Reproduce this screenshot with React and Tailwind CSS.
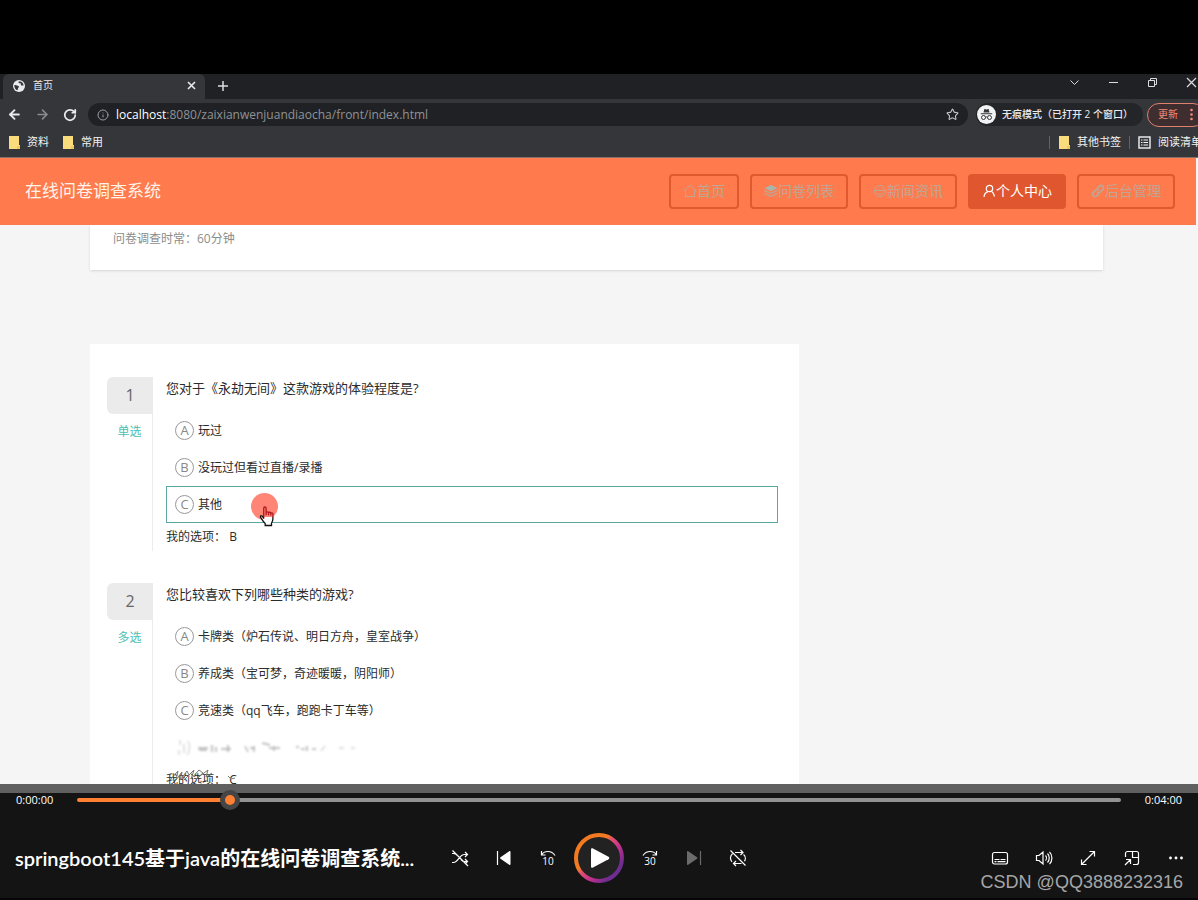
import React, { useState } from "react";
import { ArrowLeft, ArrowRight, Info, RotateCw, Star } from "lucide-react";

const questions = [
  {
    id: 1,
    type: "单选",
    input: "radio",
    title: "您对于《永劫无间》这款游戏的体验程度是?",
    options: ["玩过", "没玩过但看过直播/录播", "其他"],
    hovered: 2,
    answer: "B",
  },
  {
    id: 2,
    type: "多选",
    input: "checkbox",
    title: "您比较喜欢下列哪些种类的游戏?",
    options: [
      "卡牌类（炉石传说、明日方舟，皇室战争）",
      "养成类（宝可梦，奇迹暖暖，阴阳师）",
      "竞速类（qq飞车，跑跑卡丁车等）",
    ],
    hovered: -1,
    loading: true,
    answer: "C",
  },
];

const HomeIcon = () => (
  <svg viewBox="0 0 14 14" className="size-[14px]" fill="none" stroke="currentColor">
    <path d="M.8 7 7 1.300 13.200 7M2.500 5.800v6.700h9V5.800" />
  </svg>
);

const LayersIcon = () => (
  <svg viewBox="0 0 14 14" className="size-[14px]" fill="currentColor">
    <path d="M7 1 13.500 4 7 7.200.5 4z" fill="#a9b5ac" />
    <path d="m.5 5.500 6.500 3.200 6.500-3.200v1.500L7 10.200.5 7zM.5 8.500l6.500 3.200 6.500-3.200v1.500L7 13.200.5 10z" />
  </svg>
);

const FaceIcon = () => (
  <svg viewBox="0 0 14 14" className="size-[14px]" fill="none" stroke="currentColor">
    <circle cx="7" cy="7" r="5.500" />
    <path d="M2 6.500h10M4.500 5h1.200M8.300 5h1.200M4.300 9.200c1.500 1.300 3.900 1.300 5.400 0" />
  </svg>
);

const UserIcon = () => (
  <svg viewBox="0 0 14 14" className="size-[14px]" fill="none" stroke="currentColor" strokeWidth="1.200">
    <circle cx="7.500" cy="4.500" r="3.200" />
    <path d="M2 13c.3-3 1.800-4.800 4-5.400M9.500 7.300C11.500 8.500 12 10.500 12.500 12.500" />
  </svg>
);

const LinkIcon = () => (
  <svg viewBox="0 0 14 14" className="size-[14px]" fill="none" stroke="currentColor" strokeWidth="1.800">
    <path d="m6 4.500 2.300-2.300a2.300 2.300 0 0 1 3.400 3.400L9.300 8a2.300 2.300 0 0 1-3.300 0" />
    <path d="m8 9.500-2.300 2.300a2.300 2.300 0 0 1-3.400-3.400L4.700 6A2.300 2.300 0 0 1 8 6" />
  </svg>
);

const navItems = [
  { label: "首页", Icon: HomeIcon },
  { label: "问卷列表", Icon: LayersIcon },
  { label: "新闻资讯", Icon: FaceIcon },
  { label: "个人中心", Icon: UserIcon, active: true },
  { label: "后台管理", Icon: LinkIcon },
];

const Folder = () => (
  <svg viewBox="0 0 11 13" className="h-[13px] w-[11px]">
    <path d="M0 0h10v9h1v4H0z" fill="#fbdc7c" />
    <path d="M8 10h3v3H8z" fill="#f2c94f" />
  </svg>
);

const TabStrip = () => (
  <div className="flex h-[25px] items-stretch bg-[#202124] pl-[3px]">
    <div className="flex w-[202px] items-center rounded-t-md bg-[#35363a] pr-2 pb-[2px] pl-2.5 text-[#e8eaed]">
      <svg viewBox="0 0 12 12" className="size-3">
        <circle cx="6" cy="6" r="6" fill="#e8eaed" />
        <path
          d="M1.300 5.200c1.200-.6 2-.2 2.700.4.700.7 1.900.2 2 1.200.1.900-1.200 1-1 1.900.1.700-.4 1.400-1 1.600C2.300 9.300 1.200 7.400 1.300 5.200zM6.500 1.300c-1.300.4-1.500 1.300-.5 1.800.9.400 1.100-.3 1.700.3.600.7-.4 1.400.5 2 .9.500 1.400-.4 2.400.2C10.600 3.400 9 1.500 6.500 1.300z"
          fill="#35363a"
        />
      </svg>
      <span className="ml-2 flex-1 text-[10px]">首页</span>
      <button type="button" aria-label="关闭标签页">
        <svg viewBox="0 0 11 11" className="size-[11px]" stroke="currentColor" strokeWidth="1.600">
          <path d="m2 2 7 7M9 2 2 9" />
        </svg>
      </button>
    </div>
    <button type="button" aria-label="新标签页" className="ml-3 pb-[2px] text-[#dadce0]">
      <svg viewBox="0 0 12 12" className="size-3" stroke="currentColor" strokeWidth="1.500">
        <path d="M6 1v10M1 6h10" />
      </svg>
    </button>
    <div className="ml-auto flex items-start gap-7 pt-[3px] pr-px text-[#dadce0]">
      <button type="button" aria-label="搜索标签页">
        <svg viewBox="0 0 11 11" className="size-[11px]" fill="none" stroke="currentColor">
          <path d="m1.500 3.500 4 4 4-4" />
        </svg>
      </button>
      <button type="button" aria-label="最小化">
        <svg viewBox="0 0 11 11" className="size-[11px]" stroke="currentColor">
          <path d="M1 5.500h9" />
        </svg>
      </button>
      <button type="button" aria-label="还原">
        <svg viewBox="0 0 11 11" className="size-[11px]" fill="none" stroke="currentColor">
          <path d="M1.500 3.500h6v6h-6zM3.500 3.500v-2h6v6h-2" />
        </svg>
      </button>
      <button type="button" aria-label="关闭">
        <svg viewBox="0 0 11 11" className="size-[11px]" stroke="currentColor" strokeWidth="1.200">
          <path d="m1 1 9 9M10 1l-9 9" />
        </svg>
      </button>
    </div>
  </div>
);

const Toolbar = () => (
  <div className="flex h-[31px] items-center bg-[#35363a] pl-[7px] text-[#e8eaed]">
    <div className="flex items-center gap-[13px]">
      <button type="button" aria-label="后退">
        <ArrowLeft className="size-[15px]" strokeWidth={3} />
      </button>
      <button type="button" aria-label="前进" className="text-[#8b8c90]">
        <ArrowRight className="size-[15px]" strokeWidth={2.5} />
      </button>
      <button type="button" aria-label="刷新">
        <RotateCw className="size-[14px]" strokeWidth={3} />
      </button>
    </div>
    <div className="ml-[11px] flex h-[23px] flex-1 items-center rounded-full bg-[#202124] px-[9px]">
      <Info className="size-3 text-[#9aa0a6]" />
      <a href="#" className="ml-[7px] text-xs text-[#8f9397]">
        <span className="font-medium text-white">localhost</span>
        :8080/zaixianwenjuandiaocha/front/index.html
      </a>
      <Star className="ml-auto size-[13px] text-[#c5c7ca]" />
    </div>
    <div className="ml-2 flex h-[23px] w-[167px] shrink-0 items-center rounded-full bg-[#242528] pl-px">
      <svg viewBox="0 0 19 19" className="size-[19px]">
        <circle cx="9.500" cy="9.500" r="9.500" fill="#f1f3f4" />
        <path d="M6.500 7.500 7.300 4l2.200.6 2.200-.6.8 3.500zM3.800 8.300h11.400v1H3.800z" fill="#35363a" />
        <g fill="none" stroke="#35363a">
          <circle cx="6.500" cy="12.500" r="2" />
          <circle cx="12.500" cy="12.500" r="2" />
          <path d="M8.500 12.200c.6-.4 1.400-.4 2 0" />
        </g>
      </svg>
      <span className="ml-1.5 text-[10px] font-medium whitespace-nowrap">
        无痕模式（已打开 2 个窗口）
      </span>
    </div>
    <button
      type="button"
      className="-mr-[7px] ml-1 flex h-6 w-[58px] shrink-0 items-center gap-3 rounded-full border border-[#e0806f] bg-[#3f2e2f] pl-2.5 text-[10px] text-[#f28b7a]"
    >
      更新
      <svg viewBox="0 0 3 13" className="h-[13px] w-[3px]" fill="currentColor">
        <circle cx="1.500" cy="2" r="1.300" />
        <circle cx="1.500" cy="6.500" r="1.300" />
        <circle cx="1.500" cy="11" r="1.300" />
      </svg>
    </button>
  </div>
);

const Bookmarks = () => (
  <div className="flex h-7 items-center border-b border-[#85736b] bg-[#35363a] pb-[2px] pl-[9px] text-[11px] whitespace-nowrap text-[#f1f3f4]">
    <a href="#" className="flex items-center gap-[7px]">
      <Folder />
      资料
    </a>
    <a href="#" className="ml-[14px] flex items-center gap-[7px]">
      <Folder />
      常用
    </a>
    <div className="-mr-1 ml-auto flex items-center">
      <span className="mr-[9px] h-[13px] w-px bg-[#5f6368]" />
      <a href="#" className="flex items-center gap-[7px]">
        <Folder />
        其他书签
      </a>
      <span className="mx-2 h-[13px] w-px bg-[#5f6368]" />
      <a href="#" className="flex items-center gap-[7px]">
        <svg viewBox="0 0 13 13" className="size-[13px]" fill="none" stroke="currentColor">
          <rect x="1" y="1" width="11" height="11" strokeWidth="1.400" />
          <path d="M3 4h1.500M5.500 4H10M3 6.500h1.500M5.500 6.500H10M3 9h1.500M5.500 9H10" />
        </svg>
        阅读清单
      </a>
    </div>
  </div>
);

const SiteHeader = () => (
  <header className="mr-[2px] flex h-[67px] shrink-0 items-center justify-between bg-[#ff7b4d] pr-[21px] pb-px pl-[25px]">
    <h1 className="text-[17px] text-[#fff3ea]">在线问卷调查系统</h1>
    <nav className="flex gap-[11px]">
      {navItems.map(({ label, Icon, active }) => (
        <a
          key={label}
          href="#"
          className={
            active
              ? "flex h-[35px] items-center rounded border-2 border-[#e0562e] bg-[#e0562e] px-3 text-sm text-white"
              : "flex h-[35px] items-center rounded border-2 border-[#e0592f] px-3 text-sm text-[#c2a492]"
          }
        >
          <Icon />
          {label}
        </a>
      ))}
    </nav>
  </header>
);

const Pointer = () => (
  <span className="pointer-events-none absolute top-[6px] left-[84px]">
    <svg viewBox="0 0 28 34" className="h-[34px] w-7">
      <circle cx="13.500" cy="13.500" r="13.500" fill="#ff8576" />
      <path
        d="M12.700 25.500V15.200c0-1.600 2.400-1.600 2.400 0v4.300c.3-1 2.300-.9 2.400.3.400-.9 2.200-.7 2.300.4.500-.7 2.100-.4 2.100.9V26c0 2-.8 3-1.400 4.200v2.300h-6.300v-2c-1.600-1.500-2.900-3.500-4.600-6.200-.6-1.300 1-2 1.900-.9z"
        fill="#fff"
      />
      <path
        d="M12.700 25.500V15.200c0-1.600 2.400-1.600 2.400 0v4.300c.3-1 2.300-.9 2.400.3.400-.9 2.200-.7 2.300.4.500-.7 2.100-.4 2.100.9V24H12.700z"
        fill="#ff8576"
      />
      <path
        d="M12.700 25.500V15.200c0-1.600 2.400-1.600 2.400 0v7M15.100 19.500c.3-1 2.300-.9 2.400.3v2.400m0-2.400c.4-.9 2.200-.7 2.300.4v2.300m0-2.300c.5-.7 2.100-.4 2.100.9v2.900"
        fill="none"
        stroke="#b3161c"
        strokeWidth="1.300"
      />
      <path
        d="M21.900 24v2c0 2-.8 3-1.400 4.200v2.300h-6.300v-2c-1.600-1.500-2.900-3.500-4.600-6.200-.6-1.300 1-2 1.900-.9l1.200 2.100"
        fill="none"
        stroke="#111"
        strokeWidth="1.300"
      />
    </svg>
  </span>
);

// option row whose frame has not finished decoding
const SmearedOption = () => (
  <div className="flex h-[37px] items-center border border-transparent pl-2">
    <svg viewBox="0 0 190 20" className="h-5 w-[190px] blur-[1px]" fill="none" stroke="#b0b0b0">
      <path d="M5 2v5M4 12v5M13 3c2 3 2 10-1 14M9 6v9" stroke="#c4c4c4" />
      <path d="M23 10h10M24 12h8M37 7v7M41 9v5M46 11h4M53 7v7M50 11h6" strokeWidth="1.500" />
      <path d="M70 8l3 6M75 10h5M79 8v6M87 5l8 2M94 10h11M99 8v5" strokeWidth="1.300" />
      <path d="M121 9h3M126 11h4M132 8v5M137 11h4" stroke="#c4c4c4" strokeWidth="2" />
      <path d="M150 8l-4 5M164 10h5M176 10h4" stroke="#d8d8d8" strokeWidth="1.500" />
    </svg>
  </div>
);

const Question = ({ question }) => (
  <section className="flex">
    <div className="flex w-[46px] shrink-0 flex-col text-center">
      <span className="h-[37px] rounded-l-md bg-[#ebebeb] text-base leading-[37px] text-[#666]">
        {question.id}
      </span>
      <span className="flex-1 border-r border-[#ececec] pt-2 text-xs leading-5 text-[#4dbfb3]">
        {question.type}
      </span>
    </div>
    <div className="ml-[13px] flex-1 text-xs text-[#2b2b2b]">
      <h2 className="h-[35px] text-[13px] leading-[22px]">{question.title}</h2>
      {question.options.map((option, index) => (
        <label
          key={option}
          className={
            index === question.hovered
              ? "relative flex h-[37px] items-center gap-1 border border-[#5da7a3] pl-2"
              : "relative flex h-[37px] items-center gap-1 border border-transparent pl-2"
          }
        >
          <input
            type={question.input}
            name={`question-${question.id}`}
            className="sr-only"
          />
          <span className="flex size-[19px] items-center justify-center rounded-full border border-[#999] text-[13px] text-[#888]">
            {String.fromCharCode(65 + index)}
          </span>
          {option}
          {index === question.hovered && <Pointer />}
        </label>
      ))}
      {question.loading && <SmearedOption />}
      <p className="relative leading-7">
        我的选项： {question.answer}
        {question.loading && (
          <svg
            viewBox="0 0 72 12"
            className="absolute top-[3px] left-0 h-3 w-[72px]"
            fill="none"
            stroke="#77776c"
            strokeWidth="1"
          >
            <path d="m4 11 8-9-2 9 6-8-2 8 7-9 2 4-5 5 10-10-3 9 8-9 4 3-7 6 12-9-2 7 6-4M62 7l3 3 4-1" />
          </svg>
        )}
      </p>
    </div>
  </section>
);

const iconProps = {
  viewBox: "0 0 18 18",
  className: "size-[18px]",
  fill: "none",
  stroke: "currentColor",
  strokeWidth: 1.2,
};

const PlayerButton = ({ label, children, dim }) => (
  <button
    type="button"
    aria-label={label}
    className={
      dim
        ? "flex h-11 w-11 items-center justify-center text-[#6b6b6b]"
        : "flex h-11 w-11 items-center justify-center text-white"
    }
  >
    {children}
  </button>
);

const PlayButton = () => (
  <button type="button" aria-label="播放" className="mx-1">
    <svg viewBox="0 0 50 50" className="size-[50px]" fill="none">
      <defs>
        <linearGradient id="ring" x1="6" y1="8" x2="44" y2="42" gradientUnits="userSpaceOnUse">
          <stop offset="0.350" stopColor="#f47a22" />
          <stop offset="0.420" stopColor="#e5526a" />
          <stop offset="0.650" stopColor="#c4308e" />
          <stop offset="0.900" stopColor="#6f2c91" />
        </linearGradient>
      </defs>
      <circle cx="25" cy="25" r="23" fill="#222" stroke="url(#ring)" strokeWidth="4" />
      <path d="M17 16.500v17c0 1.200 1 1.600 2 1.100l15.500-8.300c1-.6 1-1.900 0-2.500L19 15.400c-1-.5-2-.1-2 1.100z" fill="#fff" />
    </svg>
  </button>
);

const Player = () => {
  const [progress, setProgress] = useState(14);

  return (
    <footer className="relative shrink-0 border-t-[9px] border-b-2 border-t-[#606060] border-b-[#080508] bg-[#141414] text-white">
      <div className="-mt-[3px] flex h-5 items-center gap-[23px] px-4 text-[11px]">
        <span className="w-[38px]">0:00:00</span>
        <input
          type="range"
          aria-label="播放进度"
          min="0"
          max="100"
          value={progress}
          onChange={(e) => setProgress(Number(e.target.value))}
          style={{
            backgroundImage: `linear-gradient(to right, #ff8032 ${progress}%, #929292 ${progress}%)`,
          }}
          className="h-1 min-w-0 flex-1 appearance-none rounded-full [&::-webkit-slider-thumb]:size-5 [&::-webkit-slider-thumb]:appearance-none [&::-webkit-slider-thumb]:rounded-full [&::-webkit-slider-thumb]:border-5 [&::-webkit-slider-thumb]:border-[#454545] [&::-webkit-slider-thumb]:bg-[#ff8032]"
        />
        <span className="w-[38px] text-right">0:04:00</span>
      </div>
      <div className="grid h-22 grid-cols-[1fr_auto_1fr] items-center pt-2">
        <h2 className="truncate pl-[15px] font-[Lato,'Noto_Sans_CJK_SC',sans-serif] text-xl font-semibold">
          springboot145基于java的在线问卷调查系统...
        </h2>
        <div className="flex items-center">
          <PlayerButton label="随机播放">
            <svg {...iconProps}>
              <path d="M1 13.500h1.500c5 0 5.500-8 11-8H16M1 4.500h1.500c1.500 0 2.800.8 4 2M10 10.500c1 1.200 2 2 3.500 2H16M14 3l2.500 2.500L14 8M14 10l2.500 2.500L14 15M1.500 1.500l15.500 15.500" />
            </svg>
          </PlayerButton>
          <PlayerButton label="上一个">
            <svg {...iconProps}>
              <path d="M2.500 2v14" />
              <path d="M15.500 2.800v12.400c0 .8-.7 1-1.300.6L5.500 9.700c-.6-.4-.6-1 0-1.400l8.700-6.100c.6-.4 1.300-.2 1.300.6z" fill="currentColor" stroke="none" />
            </svg>
          </PlayerButton>
          <PlayerButton label="后退 10 秒">
            <svg {...iconProps}>
              <path d="M2.500 2v4H6.500M2.500 6C5 1.500 12.500 1 16 6.500" />
              <text x="9" y="16" fontSize="10" textAnchor="middle" fill="currentColor" stroke="none">
                10
              </text>
            </svg>
          </PlayerButton>
          <PlayButton />
          <PlayerButton label="前进 30 秒">
            <svg {...iconProps}>
              <path d="M15.500 2v4H11.500M15.500 6C13 1.500 5.500 1 2 6.500" />
              <text x="9" y="16" fontSize="10" textAnchor="middle" fill="currentColor" stroke="none">
                30
              </text>
            </svg>
          </PlayerButton>
          <PlayerButton label="下一个" dim>
            <svg {...iconProps}>
              <path d="M15.500 2v14" />
              <path d="M2 2.800v12.400c0 .8.700 1 1.300.6L12 9.700c.6-.4.6-1 0-1.400L3.300 2.200c-.6-.4-1.300-.2-1.300.6z" fill="currentColor" stroke="none" />
            </svg>
          </PlayerButton>
          <PlayerButton label="重复播放">
            <svg {...iconProps}>
              <path d="M6 3.500h7.500M11.500 1l2.500 2.500L11.500 6M14.500 5.500c2 1.500 2.300 4.500 1 6.800M3.500 4.800c-2.500 2-2.700 5.700-.5 8M12.500 14.500H5M7 12l-2.500 2.500L7 17M1.500 1.500l15 15" />
            </svg>
          </PlayerButton>
        </div>
        <div className="flex justify-end">
          <PlayerButton label="字幕">
            <svg {...iconProps}>
              <rect x="1.500" y="3.500" width="15" height="11.500" rx="2" />
              <path d="M3.500 10.500h5M9.500 10.500h5M3.500 12.700h2M6.500 12.700h8" />
            </svg>
          </PlayerButton>
          <PlayerButton label="音量">
            <svg {...iconProps}>
              <path d="M1.500 6.500v5H4l4 3.500V3L4 6.500zM10.500 6.500c1.200 1.300 1.200 3.700 0 5M12.500 4.500c2.300 2.300 2.300 6.700 0 9M14.500 2.800c3.200 3.200 3.200 9.200 0 12.400" />
            </svg>
          </PlayerButton>
          <PlayerButton label="全屏">
            <svg {...iconProps}>
              <path d="M2.500 15.500l13-13M10.500 2.500h5v5M2.500 10.500v5h5" />
            </svg>
          </PlayerButton>
          <PlayerButton label="迷你播放器">
            <svg {...iconProps}>
              <path d="M2.500 8V4.500c0-1 1-2 2-2h9c1 0 2 1 2 2v9c0 1-1 2-2 2H10M9.500 2.500V8.500h6M2 16l5.500-5.500M3 10.500h4.500V15" />
            </svg>
          </PlayerButton>
          <PlayerButton label="更多">
            <svg {...iconProps}>
              <g fill="currentColor" stroke="none">
                <circle cx="3.500" cy="9" r="1.400" />
                <circle cx="9" cy="9" r="1.400" />
                <circle cx="14.500" cy="9" r="1.400" />
              </g>
            </svg>
          </PlayerButton>
        </div>
      </div>
      <span className="absolute right-[15px] bottom-1 font-['Liberation_Sans'] text-lg leading-6 text-[#a6a6a6]">
        CSDN @QQ3888232316
      </span>
    </footer>
  );
};

const App = () => {
  return (
    <div className="flex h-screen flex-col overflow-hidden bg-black pt-[74px] font-['Open_Sans','Noto_Sans_CJK_SC',sans-serif]">
      <div className="flex min-h-0 flex-1 flex-col overflow-hidden bg-[#f5f5f5]">
        <div className="shrink-0">
          <TabStrip />
          <Toolbar />
          <Bookmarks />
        </div>
        <SiteHeader />
        <main className="min-h-0 flex-1 overflow-hidden pr-[95px] pl-[90px]">
          <div className="h-[45px] bg-white pl-[23px] text-xs leading-[27px] text-[#8c8c8c] shadow">
            问卷调查时常：60分钟
          </div>
          <div className="mt-[74px] flex w-[70%] flex-col gap-8 bg-white pt-[33px] pr-[21px] pb-8 pl-[17px]">
            {questions.map((question) => (
              <Question key={question.id} question={question} />
            ))}
          </div>
        </main>
      </div>
      <Player />
    </div>
  );
};

export default App;
